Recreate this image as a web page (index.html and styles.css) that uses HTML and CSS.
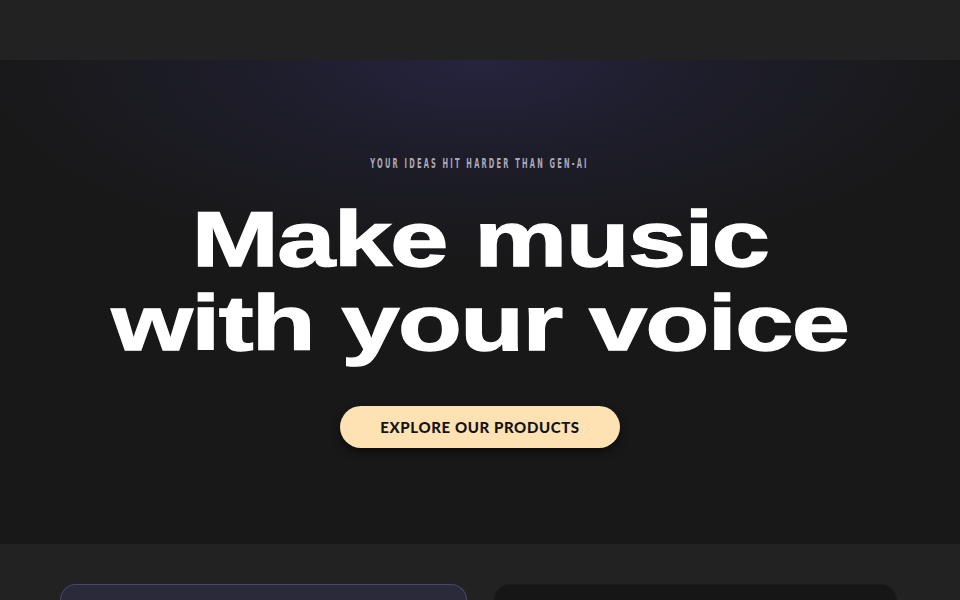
FILE: index.html
```html
<!DOCTYPE html>
<html>
<head>
<meta charset="utf-8">
<link rel="stylesheet" href="styles.css">
</head>
<body>
<header class="topbar"></header>
<section class="hero">
  <p class="eyebrow">YOUR IDEAS HIT HARDER THAN GEN-AI</p>
  <h1 class="title"><span class="line">Make music</span><span class="line">with your voice</span></h1>
  <a class="cta" href="#">EXPLORE OUR PRODUCTS</a>
</section>
<section class="products">
  <div class="card card-purple"></div>
  <div class="card card-dark"></div>
</section>
</body>
</html>
```
FILE: styles.css
```css
html, body {
  margin: 0;
  padding: 0;
  background: #222222;
  overflow: hidden;
}
.topbar {
  height: 60px;
  background: #222222;
}
.hero {
  height: 484px;
  background:
    radial-gradient(ellipse 520px 210px at 50% 0%, rgba(40,38,70,0.85) 0%, rgba(34,33,56,0.55) 45%, rgba(24,24,24,0) 100%),
    #181818;
  display: flex;
  flex-direction: column;
  align-items: center;
  box-sizing: border-box;
  padding-top: 95px;
}
.eyebrow {
  margin: 0;
  font-family: "DejaVu Sans Condensed", sans-serif;
  font-weight: 700;
  font-size: 13.5px;
  line-height: 16px;
  letter-spacing: 4px;
  color: #a9a8b8;
  transform: scaleX(0.55);
  white-space: nowrap;
}
.title {
  margin: 26px 0 0 0;
  font-family: "Liberation Sans", Arial, sans-serif;
  font-weight: 700;
  font-size: 78px;
  line-height: 84px;
  color: #ffffff;
  text-align: center;
  display: flex;
  flex-direction: column;
  align-items: center;
}
.line {
  display: block;
  transform: scaleX(1.34);
  letter-spacing: -1.2px;
  -webkit-text-stroke: 1.3px #ffffff;
  white-space: nowrap;
}
.cta {
  margin-top: 41px;
  width: 280px;
  height: 42px;
  border-radius: 21px;
  background: #ffe2b3;
  color: #141414;
  text-decoration: none;
  font-family: "Lato", sans-serif;
  font-weight: 900;
  font-size: 15px;
  letter-spacing: 0.6px;
  display: flex;
  align-items: center;
  justify-content: center;
  box-shadow: 0 4px 8px rgba(0,0,0,0.5);
}
.products {
  display: grid;
  grid-template-columns: 407px 403px;
  column-gap: 27px;
  padding: 40px 0 0 60px;
}
.card {
  height: 16px;
  border-radius: 18px 18px 0 0;
  box-sizing: border-box;
}
.card-purple {
  background: #2b2a3b;
  border: 1px solid #4a4572;
  border-bottom: none;
}
.card-dark {
  background: #161616;
  border: 1px solid #1c1c1c;
  border-bottom: none;
}
```
